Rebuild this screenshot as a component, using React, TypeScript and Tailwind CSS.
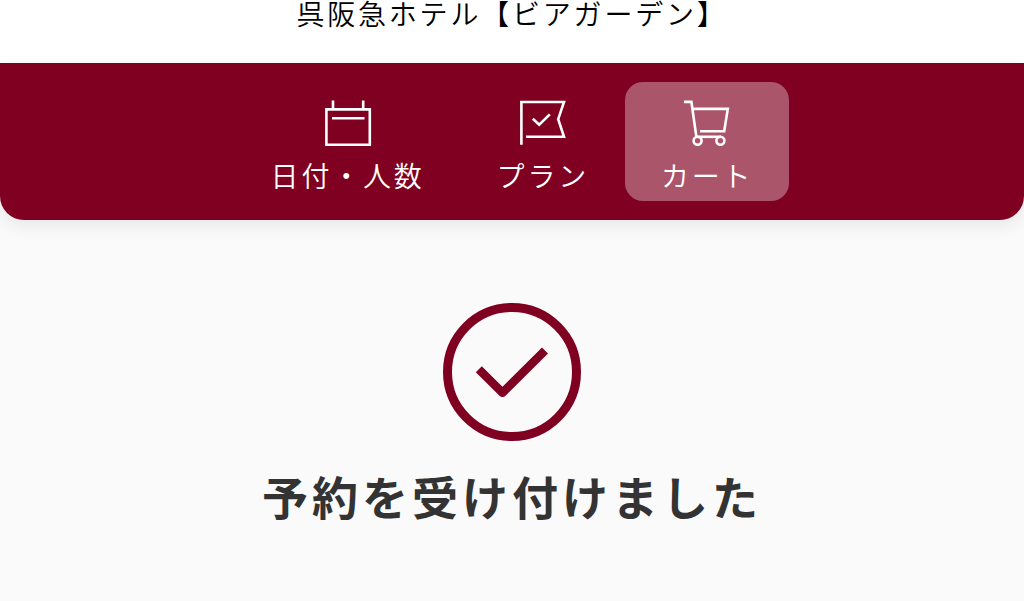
import type { ReactNode } from "react";

interface StepProps {
  label: string;
  active?: boolean;
  children: ReactNode;
}

function Step({ label, active = false, children }: StepProps) {
  return (
    <li>
      <button
        type="button"
        aria-current={active ? "step" : undefined}
        className={`flex flex-col items-center gap-[11px] rounded-[18px] px-9 pt-4 pb-3 text-white ${
          active ? "bg-[#aa556a]" : ""
        }`}
      >
        {children}
        <span className="text-[28px] leading-7 font-[350] tracking-widest whitespace-nowrap">
          {label}
        </span>
      </button>
    </li>
  );
}

function CalendarIcon() {
  return (
    <svg className="h-13 w-13" viewBox="0 0 52 52" fill="none" stroke="currentColor" strokeWidth="2.6" aria-hidden="true">
      <path d="M4.4 11.4H47.8V46.8H4.4Z" />
      <path d="M11 2.6V11.4M41.2 2.6V11.4M10 20.2H42.5" />
    </svg>
  );
}

function FlagIcon() {
  return (
    <svg className="h-13 w-13" viewBox="0 0 52 52" fill="none" stroke="currentColor" strokeWidth="2.6" aria-hidden="true">
      <path d="M4.4 46.8V4H47L41.2 21.2L47 38.8H9" />
      <path d="M15.8 20.8L22.2 26.8L32.8 16.4" />
    </svg>
  );
}

function CartIcon() {
  return (
    <svg className="h-13 w-13" viewBox="0 0 52 52" fill="none" stroke="currentColor" strokeWidth="2.6" aria-hidden="true">
      <path d="M3 3.9H10.4L15.4 39" />
      <path d="M11.5 10.9H46.8L43.2 33.2H19" />
      <path d="M15 38.8H40" />
      <circle cx="16.6" cy="42.8" r="4" />
      <circle cx="39.4" cy="42.8" r="4" />
    </svg>
  );
}

export default function App() {
  return (
    <div className="min-h-screen bg-[#fafafa] font-['Noto_Sans_CJK_JP',sans-serif]">
      <header>
        <h1 className="bg-white pb-[37px] text-center text-[28px] leading-[26px] font-[350] tracking-widest text-black">
          呉阪急ホテル【ビアガーデン】
        </h1>
        <nav className="rounded-b-3xl bg-[#7f0020] py-[19px] shadow-[0_6px_18px_rgba(0,0,0,0.08)]">
          <ul className="flex justify-center">
            <Step label="日付・人数">
              <CalendarIcon />
            </Step>
            <Step label="プラン">
              <FlagIcon />
            </Step>
            <Step label="カート" active>
              <CartIcon />
            </Step>
          </ul>
        </nav>
      </header>

      <main className="flex flex-col items-center px-4 pt-[83px] pb-16">
        <svg className="h-[138px] w-[138px] text-[#7f0020]" viewBox="0 0 138 138" fill="none" stroke="currentColor" aria-hidden="true">
          <circle cx="69" cy="69" r="64.5" strokeWidth="9" />
          <path d="M35.8 66.2L59.5 89.8L102 47.5" strokeWidth="8.5" strokeLinejoin="round" />
        </svg>
        <h2 className="mt-7 text-center text-[46px] leading-[52px] font-bold tracking-[4px] text-[#333]">
          予約を受け付けました
        </h2>
      </main>
    </div>
  );
}
